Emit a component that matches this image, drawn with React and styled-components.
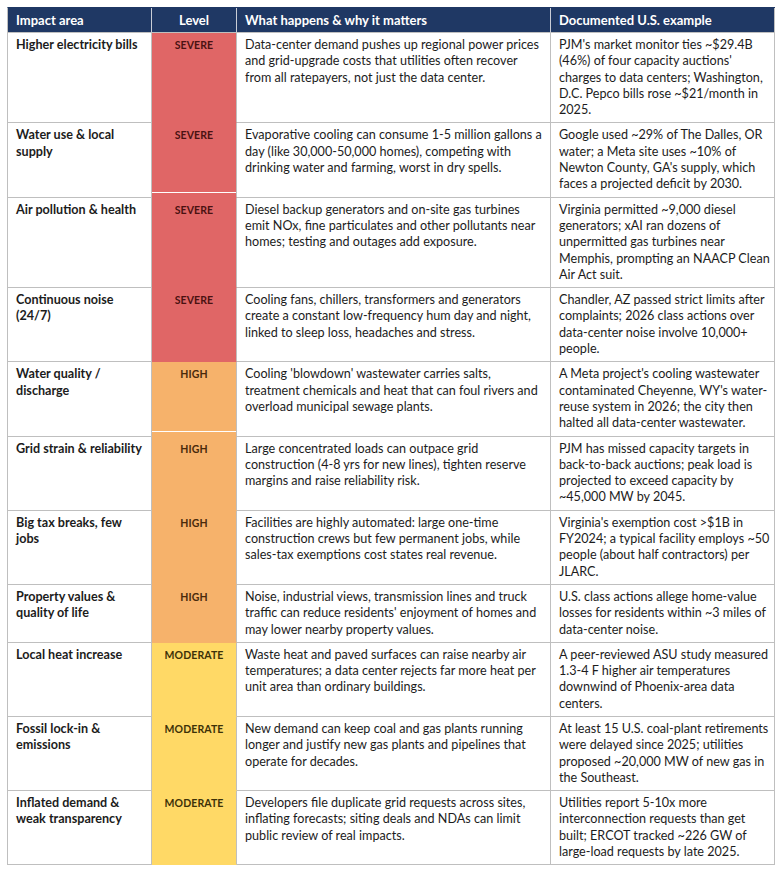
import styled, { createGlobalStyle } from "styled-components";

const GlobalStyle = createGlobalStyle`
  body {
    margin: 0;
    background: #ffffff;
    font-family: Lato, "Open Sans", sans-serif;
  }
`;

const LEVELS = {
  SEVERE: { bg: "#e06666", fg: "#4a1212" },
  HIGH: { bg: "#f6b26b", fg: "#4a2a0c" },
  MODERATE: { bg: "#ffd966", fg: "#3d3108" },
};

const rows = [
  {
    area: ["Higher electricity bills"],
    level: "SEVERE",
    what: [
      "Data-center demand pushes up regional power prices",
      "and grid-upgrade costs that utilities often recover",
      "from all ratepayers, not just the data center.",
    ],
    example: [
      "PJM's market monitor ties ~$29.4B",
      "(46%) of four capacity auctions'",
      "charges to data centers; Washington,",
      "D.C. Pepco bills rose ~$21/month in",
      "2025.",
    ],
  },
  {
    area: ["Water use & local", "supply"],
    level: "SEVERE",
    seam: true,
    what: [
      "Evaporative cooling can consume 1-5 million gallons a",
      "day (like 30,000-50,000 homes), competing with",
      "drinking water and farming, worst in dry spells.",
    ],
    example: [
      "Google used ~29% of The Dalles, OR",
      "water; a Meta site uses ~10% of",
      "Newton County, GA's supply, which",
      "faces a projected deficit by 2030.",
    ],
  },
  {
    area: ["Air pollution & health"],
    level: "SEVERE",
    what: [
      "Diesel backup generators and on-site gas turbines",
      "emit NOx, fine particulates and other pollutants near",
      "homes; testing and outages add exposure.",
    ],
    example: [
      "Virginia permitted ~9,000 diesel",
      "generators; xAI ran dozens of",
      "unpermitted gas turbines near",
      "Memphis, prompting an NAACP Clean",
      "Air Act suit.",
    ],
  },
  {
    area: ["Continuous noise", "(24/7)"],
    level: "SEVERE",
    what: [
      "Cooling fans, chillers, transformers and generators",
      "create a constant low-frequency hum day and night,",
      "linked to sleep loss, headaches and stress.",
    ],
    example: [
      "Chandler, AZ passed strict limits after",
      "complaints; 2026 class actions over",
      "data-center noise involve 10,000+",
      "people.",
    ],
  },
  {
    area: ["Water quality /", "discharge"],
    level: "HIGH",
    seam: true,
    what: [
      "Cooling 'blowdown' wastewater carries salts,",
      "treatment chemicals and heat that can foul rivers and",
      "overload municipal sewage plants.",
    ],
    example: [
      "A Meta project's cooling wastewater",
      "contaminated Cheyenne, WY's water-",
      "reuse system in 2026; the city then",
      "halted all data-center wastewater.",
    ],
  },
  {
    area: ["Grid strain & reliability"],
    level: "HIGH",
    what: [
      "Large concentrated loads can outpace grid",
      "construction (4-8 yrs for new lines), tighten reserve",
      "margins and raise reliability risk.",
    ],
    example: [
      "PJM has missed capacity targets in",
      "back-to-back auctions; peak load is",
      "projected to exceed capacity by",
      "~45,000 MW by 2045.",
    ],
  },
  {
    area: ["Big tax breaks, few", "jobs"],
    level: "HIGH",
    what: [
      "Facilities are highly automated: large one-time",
      "construction crews but few permanent jobs, while",
      "sales-tax exemptions cost states real revenue.",
    ],
    example: [
      "Virginia's exemption cost >$1B in",
      "FY2024; a typical facility employs ~50",
      "people (about half contractors) per",
      "JLARC.",
    ],
  },
  {
    area: ["Property values &", "quality of life"],
    level: "HIGH",
    what: [
      "Noise, industrial views, transmission lines and truck",
      "traffic can reduce residents' enjoyment of homes and",
      "may lower nearby property values.",
    ],
    example: [
      "U.S. class actions allege home-value",
      "losses for residents within ~3 miles of",
      "data-center noise.",
    ],
  },
  {
    area: ["Local heat increase"],
    level: "MODERATE",
    what: [
      "Waste heat and paved surfaces can raise nearby air",
      "temperatures; a data center rejects far more heat per",
      "unit area than ordinary buildings.",
    ],
    example: [
      "A peer-reviewed ASU study measured",
      "1.3-4 F higher air temperatures",
      "downwind of Phoenix-area data",
      "centers.",
    ],
  },
  {
    area: ["Fossil lock-in &", "emissions"],
    level: "MODERATE",
    what: [
      "New demand can keep coal and gas plants running",
      "longer and justify new gas plants and pipelines that",
      "operate for decades.",
    ],
    example: [
      "At least 15 U.S. coal-plant retirements",
      "were delayed since 2025; utilities",
      "proposed ~20,000 MW of new gas in",
      "the Southeast.",
    ],
  },
  {
    area: ["Inflated demand &", "weak transparency"],
    level: "MODERATE",
    what: [
      "Developers file duplicate grid requests across sites,",
      "inflating forecasts; siting deals and NDAs can limit",
      "public review of real impacts.",
    ],
    example: [
      "Utilities report 5-10x more",
      "interconnection requests than get",
      "built; ERCOT tracked ~226 GW of",
      "large-load requests by late 2025.",
    ],
  },
];

const Page = styled.div`
  padding: 7px;
`;

const Table = styled.table`
  width: 767px;
  table-layout: fixed;
  border-collapse: separate;
  border-spacing: 0;
  border-top: 1px solid #1f3864;
  border-left: 1px solid #bfbfbf;
  color: #1c1c1c;
`;

const HeadCell = styled.th`
  background: #1f3864;
  color: #ffffff;
  font-size: 13px;
  font-weight: 700;
  line-height: 18px;
  padding: 3px 8px;
  text-align: ${(p) => (p.$center ? "center" : "left")};
  border-right: 1px solid ${(p) => (p.$last ? "#bfbfbf" : "#c9cdd6")};
  border-bottom: 1px solid #bfbfbf;
  white-space: nowrap;
`;

const Cell = styled.td`
  vertical-align: top;
  padding: 4px 8px;
  font-size: 12.6px;
  line-height: 16.3px;
  border-right: 1px solid #bfbfbf;
  border-bottom: 1px solid #bfbfbf;
  font-weight: ${(p) => (p.$bold ? 700 : 400)};
`;

const LevelCell = styled.td`
  vertical-align: top;
  padding: 4px 4px;
  text-align: center;
  font-size: 10.5px;
  font-weight: 700;
  line-height: 16.3px;
  letter-spacing: 0.1px;
  color: ${(p) => LEVELS[p.$level].fg};
  border-right: 1px solid #bfbfbf;
  border-bottom: 1px solid ${(p) => LEVELS[p.$level].bg};
  background: ${(p) => {
    const c = LEVELS[p.$level].bg;
    return p.$seam
      ? `linear-gradient(to bottom, ${c} 0, ${c} calc(100% - 5px), #ffffff calc(100% - 5px), #ffffff calc(100% - 4px), ${c} calc(100% - 4px))`
      : c;
  }};
`;

const Line = styled.span`
  display: block;
  white-space: nowrap;
`;

function Lines({ items }) {
  return items.map((t, i) => <Line key={i}>{t}</Line>);
}

export default function App() {
  return (
    <>
      <GlobalStyle />
      <Page>
        <Table>
          <colgroup>
            <col style={{ width: 144 }} />
            <col style={{ width: 85 }} />
            <col style={{ width: 314 }} />
            <col style={{ width: 224 }} />
          </colgroup>
          <thead>
            <tr>
              <HeadCell>Impact area</HeadCell>
              <HeadCell $center>Level</HeadCell>
              <HeadCell>What happens &amp; why it matters</HeadCell>
              <HeadCell $last>Documented U.S. example</HeadCell>
            </tr>
          </thead>
          <tbody>
            {rows.map((r, i) => (
              <tr key={i}>
                <Cell $bold>
                  <Lines items={r.area} />
                </Cell>
                <LevelCell $level={r.level} $seam={r.seam}>
                  {r.level}
                </LevelCell>
                <Cell>
                  <Lines items={r.what} />
                </Cell>
                <Cell>
                  <Lines items={r.example} />
                </Cell>
              </tr>
            ))}
          </tbody>
        </Table>
      </Page>
    </>
  );
}
